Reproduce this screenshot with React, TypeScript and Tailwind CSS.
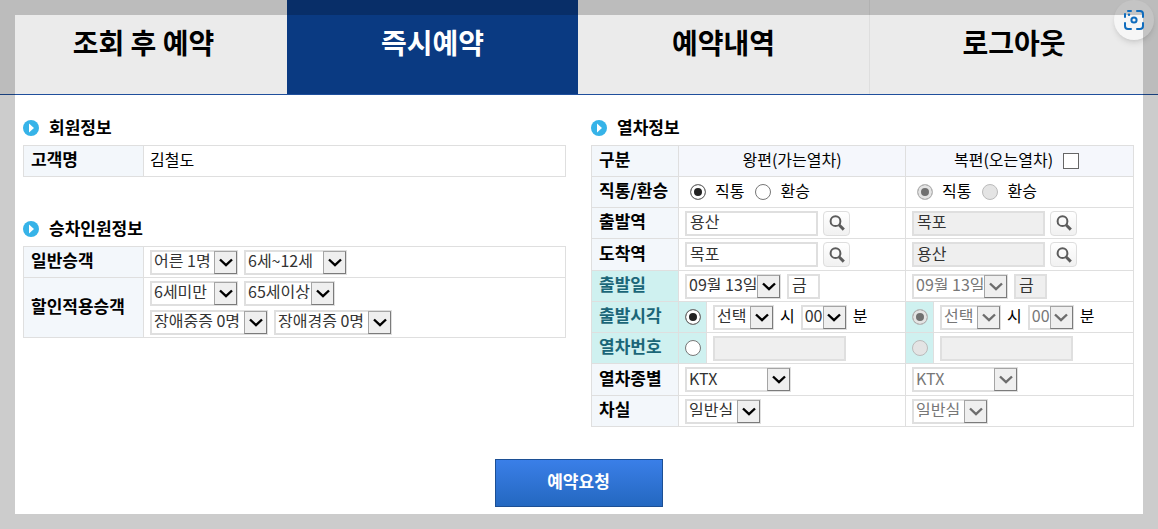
import React from "react";
import clsx from "clsx";

const tabs = ["조회 후 예약", "즉시예약", "예약내역", "로그아웃"];

const labelCell = "border border-[#dfdfdf] bg-[#f3f7fb] pb-1 pl-[7px] text-left text-[17px] leading-5 font-bold whitespace-nowrap";
const timeCell = "border border-[#dfdfdf] bg-[#cff1f0] pb-1 pl-[7px] text-left text-[17px] leading-5 font-bold whitespace-nowrap text-[#1b6678]";
const cell = "border border-[#dfdfdf] px-1.5";
const radioCell = "border border-[#dfdfdf] bg-[#cff1f0]";

function Heading({ children }: { children: React.ReactNode }) {
  return (
    <h2 className="mb-[9px] flex h-4 items-center gap-2.5 text-[17px] leading-4 font-bold">
      <svg viewBox="0 0 16 16" className="size-4" aria-hidden="true">
        <circle cx="8" cy="8" r="8" fill="#36b3e8" />
        <path d="M6 3.5v9L11 8z" fill="#fff" />
      </svg>
      <span className="pb-0.5">{children}</span>
    </h2>
  );
}

type SelectProps = {
  label: string;
  value: string;
  width: string;
  disabled?: boolean;
};

function Select({ label, value, width, disabled }: SelectProps) {
  return (
    <span className={clsx("relative inline-flex h-[25px]", width)}>
      <select
        aria-label={label}
        disabled={disabled}
        defaultValue={value}
        className="h-full w-full appearance-none border-2 border-[#dfdfdf] bg-white pb-1 pl-0.5 text-base leading-4 text-[#333] disabled:text-[#777] disabled:opacity-100"
      >
        <option>{value}</option>
      </select>
      <span
        className={clsx(
          "pointer-events-none absolute inset-y-px right-px grid w-[23px] place-items-center border border-t-[#a5a5a5] border-r-[#7b7b7b] border-b-[#7b7b7b] border-l-[#a5a5a5] bg-[#efefef]",
          disabled ? "text-[#6d6d6d]" : "text-black"
        )}
      >
        <svg viewBox="0 0 14 9" className="h-[9px] w-3.5" fill="none" stroke="currentColor" strokeWidth="2.4" aria-hidden="true">
          <path d="M1 1.5 7 7.2l6-5.7" />
        </svg>
      </span>
    </span>
  );
}

function Radio({ name, label, ...rest }: { name: string; label?: string; defaultChecked?: boolean; disabled?: boolean }) {
  return (
    <input
      type="radio"
      name={name}
      aria-label={label}
      className="size-4 shrink-0 appearance-none rounded-full border border-[#777] bg-white checked:bg-[#222] checked:shadow-[inset_0_0_0_3px_#fff] disabled:border-[#bbb] disabled:bg-[#e4e4e4] disabled:checked:bg-[#707070] disabled:checked:shadow-[inset_0_0_0_3px_#e4e4e4]"
      {...rest}
    />
  );
}

function TextBox({ label, value, width, disabled }: SelectProps) {
  return (
    <input
      type="text"
      aria-label={label}
      defaultValue={value}
      disabled={disabled}
      className={clsx(
        "h-[25px] border-2 border-[#dfdfdf] bg-white pb-1 pl-[3px] text-base leading-4 text-[#333] disabled:bg-[#efefef]",
        width
      )}
    />
  );
}

function Transfer({ name, disabled }: { name: string; disabled?: boolean }) {
  return (
    <div className="flex items-center gap-[11px] pl-[5px]">
      <label className="flex items-center gap-[9px]">
        <Radio name={name} defaultChecked disabled={disabled} />
        <span className="pb-1">직통</span>
      </label>
      <label className="flex items-center gap-[9px]">
        <Radio name={name} disabled={disabled} />
        <span className="pb-1">환승</span>
      </label>
    </div>
  );
}

function Station({ label, value, disabled }: { label: string; value: string; disabled?: boolean }) {
  return (
    <div className="flex items-center gap-[5px]">
      <TextBox label={label} value={value} width="w-[133px]" disabled={disabled} />
      <button
        type="button"
        aria-label={`${label} 검색`}
        className="grid h-[25px] w-[27px] place-items-center rounded-sm border border-[#dedede] bg-linear-to-b from-white to-[#f1f1f1]"
      >
        <svg viewBox="0 0 16 16" className="size-4" fill="none" stroke="#5c5c5c" aria-hidden="true">
          <circle cx="6.5" cy="6.2" r="4.9" strokeWidth="2" />
          <path d="m10.200 10 4.600 4.600" strokeWidth="3" />
        </svg>
      </button>
    </div>
  );
}

function Departure({ label, disabled }: { label: string; disabled?: boolean }) {
  return (
    <div className="flex items-center gap-1.5">
      <Select label={`${label} 출발일`} value="09월 13일" width="w-24" disabled={disabled} />
      <TextBox label={`${label} 요일`} value="금" width="w-[33px]" disabled={disabled} />
    </div>
  );
}

function Time({ label, disabled }: { label: string; disabled?: boolean }) {
  return (
    <div className="flex items-center gap-1.5">
      <Select label={`${label} 시`} value="선택" width="w-[61px]" disabled={disabled} />
      <span className="pb-1">시</span>
      <Select label={`${label} 분`} value="00" width="w-[46px]" disabled={disabled} />
      <span className="pb-1">분</span>
    </div>
  );
}

export default function App() {
  return (
    <div className="relative min-h-screen bg-white font-['Noto_Sans_CJK_KR',sans-serif] text-base leading-5 text-black">
      <nav className="grid h-[95px] grid-cols-[287fr_291fr_291fr_289fr] border-b border-[#1f4f9c] bg-[#ebebeb]">
        {tabs.map((tab, i) => (
          <a
            key={tab}
            href="#"
            className={clsx(
              "flex items-center justify-center pb-2.5 text-[28px] leading-9 font-bold",
              i === 1 && "bg-[#0a3a82] text-white",
              i === 3 && "border-l border-[#dedede]"
            )}
          >
            {tab}
          </a>
        ))}
      </nav>

      <main className="pt-[25px] pr-6 pb-[22px] pl-[23px]">
        <div className="grid grid-cols-2 items-start gap-x-[25px]">
          <div>
            <Heading>회원정보</Heading>
            <table className="w-full table-fixed border-collapse">
              <tbody>
                <tr className="h-[31px]">
                  <th scope="row" className={clsx(labelCell, "w-[120px]")}>고객명</th>
                  <td className={clsx(cell, "pb-1")}>김철도</td>
                </tr>
              </tbody>
            </table>

            <div className="mt-11">
              <Heading>승차인원정보</Heading>
              <table className="w-full table-fixed border-collapse">
                <tbody>
                  <tr className="h-[31px]">
                    <th scope="row" className={clsx(labelCell, "w-[120px]")}>일반승객</th>
                    <td className={cell}>
                      <div className="flex gap-1.5">
                        <Select label="어른" value="어른 1명" width="w-[88px]" />
                        <Select label="어린이" value="6세~12세" width="w-[103px]" />
                      </div>
                    </td>
                  </tr>
                  <tr className="h-[60px]">
                    <th scope="row" className={labelCell}>할인적용승객</th>
                    <td className={cell}>
                      <div className="flex gap-1.5">
                        <Select label="유아" value="6세미만" width="w-[88px]" />
                        <Select label="경로" value="65세이상" width="w-[91px]" />
                      </div>
                      <div className="mt-1 flex gap-1.5">
                        <Select label="장애중증" value="장애중증 0명" width="w-[118px]" />
                        <Select label="장애경증" value="장애경증 0명" width="w-[118px]" />
                      </div>
                    </td>
                  </tr>
                </tbody>
              </table>
            </div>
          </div>

          <div>
            <Heading>열차정보</Heading>
            <table className="w-full table-fixed border-collapse">
              <colgroup>
                <col className="w-[87px]" />
                <col className="w-7" />
                <col className="w-[199px]" />
                <col className="w-7" />
                <col />
              </colgroup>
              <tbody>
                <tr className="h-[31px]">
                  <th scope="row" className={labelCell}>구분</th>
                  <th scope="col" colSpan={2} className="border border-[#dfdfdf] bg-[#f5f7fc] pb-1 font-normal">왕편(가는열차)</th>
                  <th scope="col" colSpan={2} className="border border-[#dfdfdf] bg-[#f5f7fc] font-normal">
                    <label className="flex items-center justify-center gap-2.5 pr-1.5">
                      <span className="pb-1">복편(오는열차)</span>
                      <input type="checkbox" className="size-4 appearance-none border border-[#666] bg-white" />
                    </label>
                  </th>
                </tr>
                <tr className="h-[31px]">
                  <th scope="row" className={labelCell}>직통/환승</th>
                  <td colSpan={2} className={cell}><Transfer name="go-transfer" /></td>
                  <td colSpan={2} className={cell}><Transfer name="back-transfer" disabled /></td>
                </tr>
                <tr className="h-[31px]">
                  <th scope="row" className={labelCell}>출발역</th>
                  <td colSpan={2} className={cell}><Station label="출발역" value="용산" /></td>
                  <td colSpan={2} className={cell}><Station label="복편 출발역" value="목포" disabled /></td>
                </tr>
                <tr className="h-8">
                  <th scope="row" className={labelCell}>도착역</th>
                  <td colSpan={2} className={cell}><Station label="도착역" value="목포" /></td>
                  <td colSpan={2} className={cell}><Station label="복편 도착역" value="용산" disabled /></td>
                </tr>
                <tr className="h-[31px]">
                  <th scope="row" className={timeCell}>출발일</th>
                  <td colSpan={2} className={cell}><Departure label="왕편" /></td>
                  <td colSpan={2} className={cell}><Departure label="복편" disabled /></td>
                </tr>
                <tr className="h-[31px]">
                  <th scope="row" className={timeCell}>출발시각</th>
                  <td className={radioCell}>
                    <div className="flex justify-center"><Radio name="go-by" label="왕편 출발시각" defaultChecked /></div>
                  </td>
                  <td className={cell}><Time label="왕편" /></td>
                  <td className={radioCell}>
                    <div className="flex justify-center"><Radio name="back-by" label="복편 출발시각" defaultChecked disabled /></div>
                  </td>
                  <td className={cell}><Time label="복편" disabled /></td>
                </tr>
                <tr className="h-[31px]">
                  <th scope="row" className={timeCell}>열차번호</th>
                  <td className={radioCell}>
                    <div className="flex justify-center"><Radio name="go-by" label="왕편 열차번호" /></div>
                  </td>
                  <td className={cell}>
                    <div className="flex"><TextBox label="왕편 열차번호 입력" value="" width="w-[133px]" disabled /></div>
                  </td>
                  <td className={radioCell}>
                    <div className="flex justify-center"><Radio name="back-by" label="복편 열차번호" disabled /></div>
                  </td>
                  <td className={cell}>
                    <div className="flex"><TextBox label="복편 열차번호 입력" value="" width="w-[133px]" disabled /></div>
                  </td>
                </tr>
                <tr className="h-8">
                  <th scope="row" className={labelCell}>열차종별</th>
                  <td colSpan={2} className={cell}>
                    <div className="flex"><Select label="왕편 열차종별" value="KTX" width="w-[106px]" /></div>
                  </td>
                  <td colSpan={2} className={cell}>
                    <div className="flex"><Select label="복편 열차종별" value="KTX" width="w-[106px]" disabled /></div>
                  </td>
                </tr>
                <tr className="h-[31px]">
                  <th scope="row" className={labelCell}>차실</th>
                  <td colSpan={2} className={cell}>
                    <div className="flex"><Select label="왕편 차실" value="일반실" width="w-[76px]" /></div>
                  </td>
                  <td colSpan={2} className={cell}>
                    <div className="flex"><Select label="복편 차실" value="일반실" width="w-[76px]" disabled /></div>
                  </td>
                </tr>
              </tbody>
            </table>
          </div>
        </div>

        <div className="mt-8 flex justify-center">
          <button
            type="submit"
            className="h-12 w-[168px] border border-[#1c4f94] bg-linear-to-b from-[#3a7fe8] to-[#2468c0] pb-1 text-[17px] leading-5 font-bold text-white"
          >
            예약요청
          </button>
        </div>
      </main>

      <button
        type="button"
        aria-label="이미지 검색"
        className="absolute top-0 right-1 grid size-10 place-items-center rounded-full bg-[#f6f6f6] shadow-md"
      />

      <div className="pointer-events-none absolute inset-0 border-[15px] border-black/20" />

      <svg
        viewBox="0 0 20 20"
        className="pointer-events-none absolute top-2.5 right-3.5 size-5"
        fill="none"
        stroke="#0f6cbd"
        strokeWidth="2"
        strokeLinecap="round"
        aria-hidden="true"
      >
        <path d="M4 1h3M1 7V4M13 1h3a3 3 0 0 1 3 3v3M19 13v3a3 3 0 0 1-3 3h-3M7 19H4a3 3 0 0 1-3-3v-3" />
        <circle cx="10" cy="10" r="2.600" />
        <circle cx="5" cy="4.800" r="1.200" fill="#0f6cbd" stroke="none" />
      </svg>
    </div>
  );
}
